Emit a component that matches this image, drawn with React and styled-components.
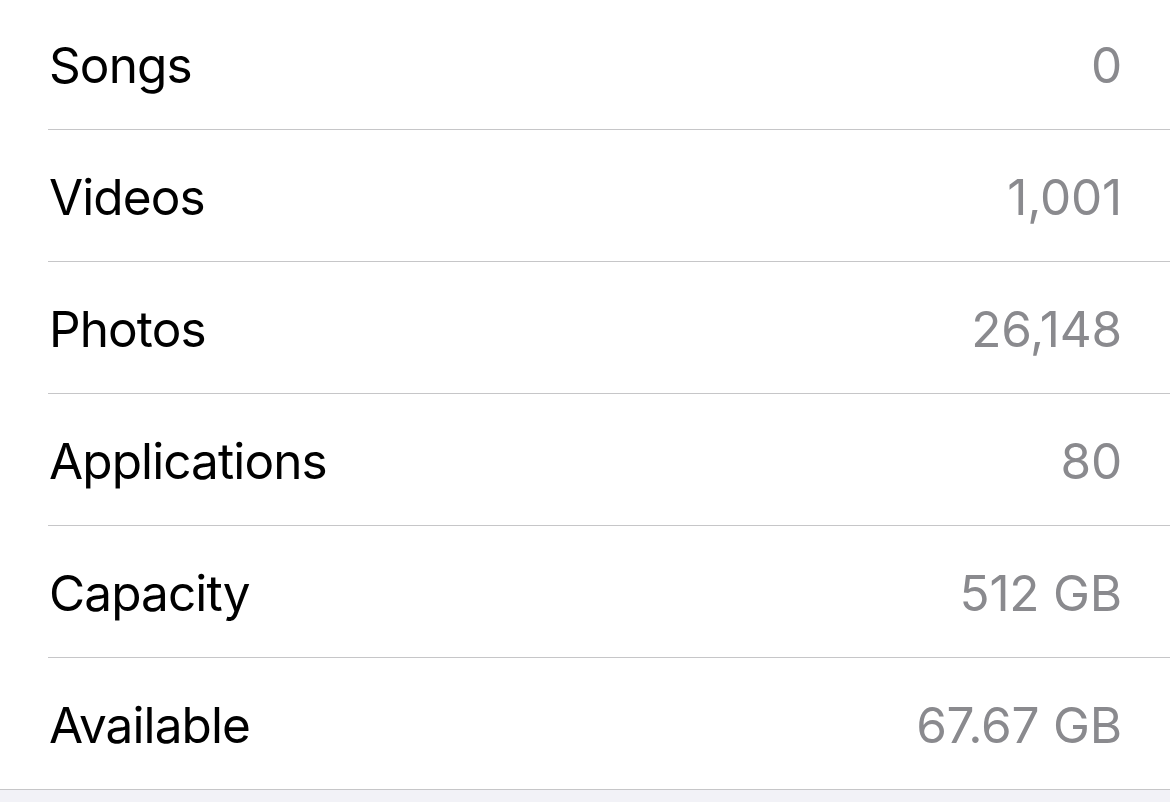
import React from "react";
import styled, { createGlobalStyle } from "styled-components";

const Global = createGlobalStyle`
  html, body { margin: 0; padding: 0; background: #f2f2f7; }
  body { font-family: Inter, "Open Sans", "Liberation Sans", sans-serif; -webkit-font-smoothing: antialiased; overflow: hidden; }
`;

const Page = styled.div`
  width: 1170px;
  height: 802px;
  background: #f2f2f7;
  overflow: hidden;
`;

const Group = styled.ul`
  list-style: none;
  margin: -2px 0 0 0;
  padding: 0;
  background: #ffffff;
  border-bottom: 1px solid #c6c6c8;
`;

const Row = styled.li`
  display: flex;
  padding-left: 48px;
`;

const RowInner = styled.div`
  flex: 1;
  box-sizing: border-box;
  height: ${(p) => (p.$last ? "131px" : "132px")};
  padding-top: 2px;
  display: flex;
  align-items: center;
  justify-content: space-between;
  padding-right: 48px;
  border-bottom: ${(p) => (p.$last ? "none" : "1px solid #c6c6c8")};
`;

const Label = styled.span`
  font-size: 49.5px;
  letter-spacing: -0.9px;
  color: #000000;
  padding-left: 1px;
`;

const Value = styled.span`
  font-size: 49.5px;
  letter-spacing: -0.2px;
  color: #8a8a8e;
`;

const items = [
  ["Songs", "0"],
  ["Videos", "1,001"],
  ["Photos", "26,148"],
  ["Applications", "80"],
  ["Capacity", "512 GB"],
  ["Available", "67.67 GB"],
];

export default function App() {
  return (
    <Page>
      <Global />
      <Group>
        {items.map(([l, v], i) => (
          <Row key={l}>
            <RowInner $last={i === items.length - 1}>
              <Label>{l}</Label>
              <Value>{v}</Value>
            </RowInner>
          </Row>
        ))}
      </Group>
    </Page>
  );
}
